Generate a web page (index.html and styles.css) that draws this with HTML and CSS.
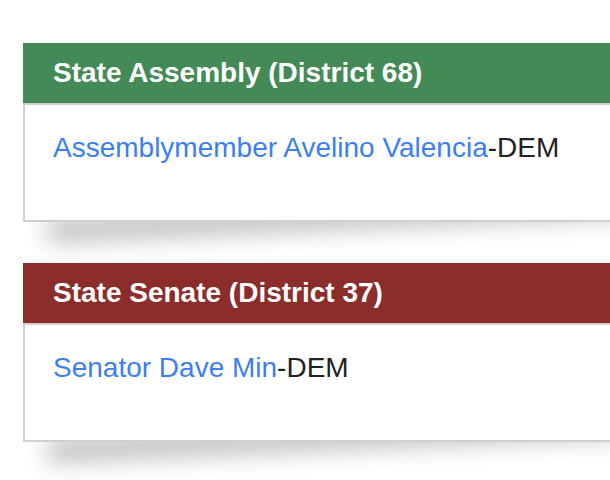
FILE: index.html
```html
<!DOCTYPE html>
<html lang="en">
<head>
<meta charset="utf-8">
<title>Representatives</title>
<link rel="stylesheet" href="styles.css">
</head>
<body>
<main class="list">
  <section class="card">
    <h2 class="card-head card-head--assembly">State Assembly (District 68)</h2>
    <div class="card-body">
      <a class="rep-link" href="#">Assemblymember Avelino Valencia</a><span class="party">-DEM</span>
    </div>
  </section>
  <section class="card">
    <h2 class="card-head card-head--senate">State Senate (District 37)</h2>
    <div class="card-body">
      <a class="rep-link" href="#">Senator Dave Min</a><span class="party">-DEM</span>
    </div>
  </section>
</main>
</body>
</html>
```
FILE: styles.css
```css
html {
  background: #ffffff;
  overflow: hidden;
}

body {
  margin: 0;
  padding: 0;
  font-family: "Liberation Sans", Arial, Helvetica, sans-serif;
}

.list {
  display: flex;
  flex-direction: column;
  gap: 41px;
  padding: 43px 0 80px 23px;
}

.card {
  position: relative;
  width: 660px;
  background: #fff;
}

.card::before {
  content: "";
  position: absolute;
  z-index: -1;
  left: 24px;
  bottom: 6px;
  width: 640px;
  height: 20px;
  box-shadow: 0 25px 24px rgba(0, 0, 0, 0.3);
  transform: rotate(-2.6deg);
  transform-origin: left bottom;
}

.card-head {
  margin: 0;
  height: 60px;
  box-sizing: border-box;
  padding: 0 30px;
  display: flex;
  align-items: center;
  color: #fff;
  font-size: 28px;
  font-weight: bold;
}

.card-head--assembly { background: #438a56; }
.card-head--senate { background: #8b2d2b; }

.card-body {
  height: 119px;
  box-sizing: border-box;
  border: 2px solid #cfcfcf;
  background: #fff;
  padding: 27px 28px;
  font-size: 28px;
  color: #222;
}

.rep-link {
  color: #3b7ff0;
  text-decoration: none;
}

.party {
  color: #222;
}
```
